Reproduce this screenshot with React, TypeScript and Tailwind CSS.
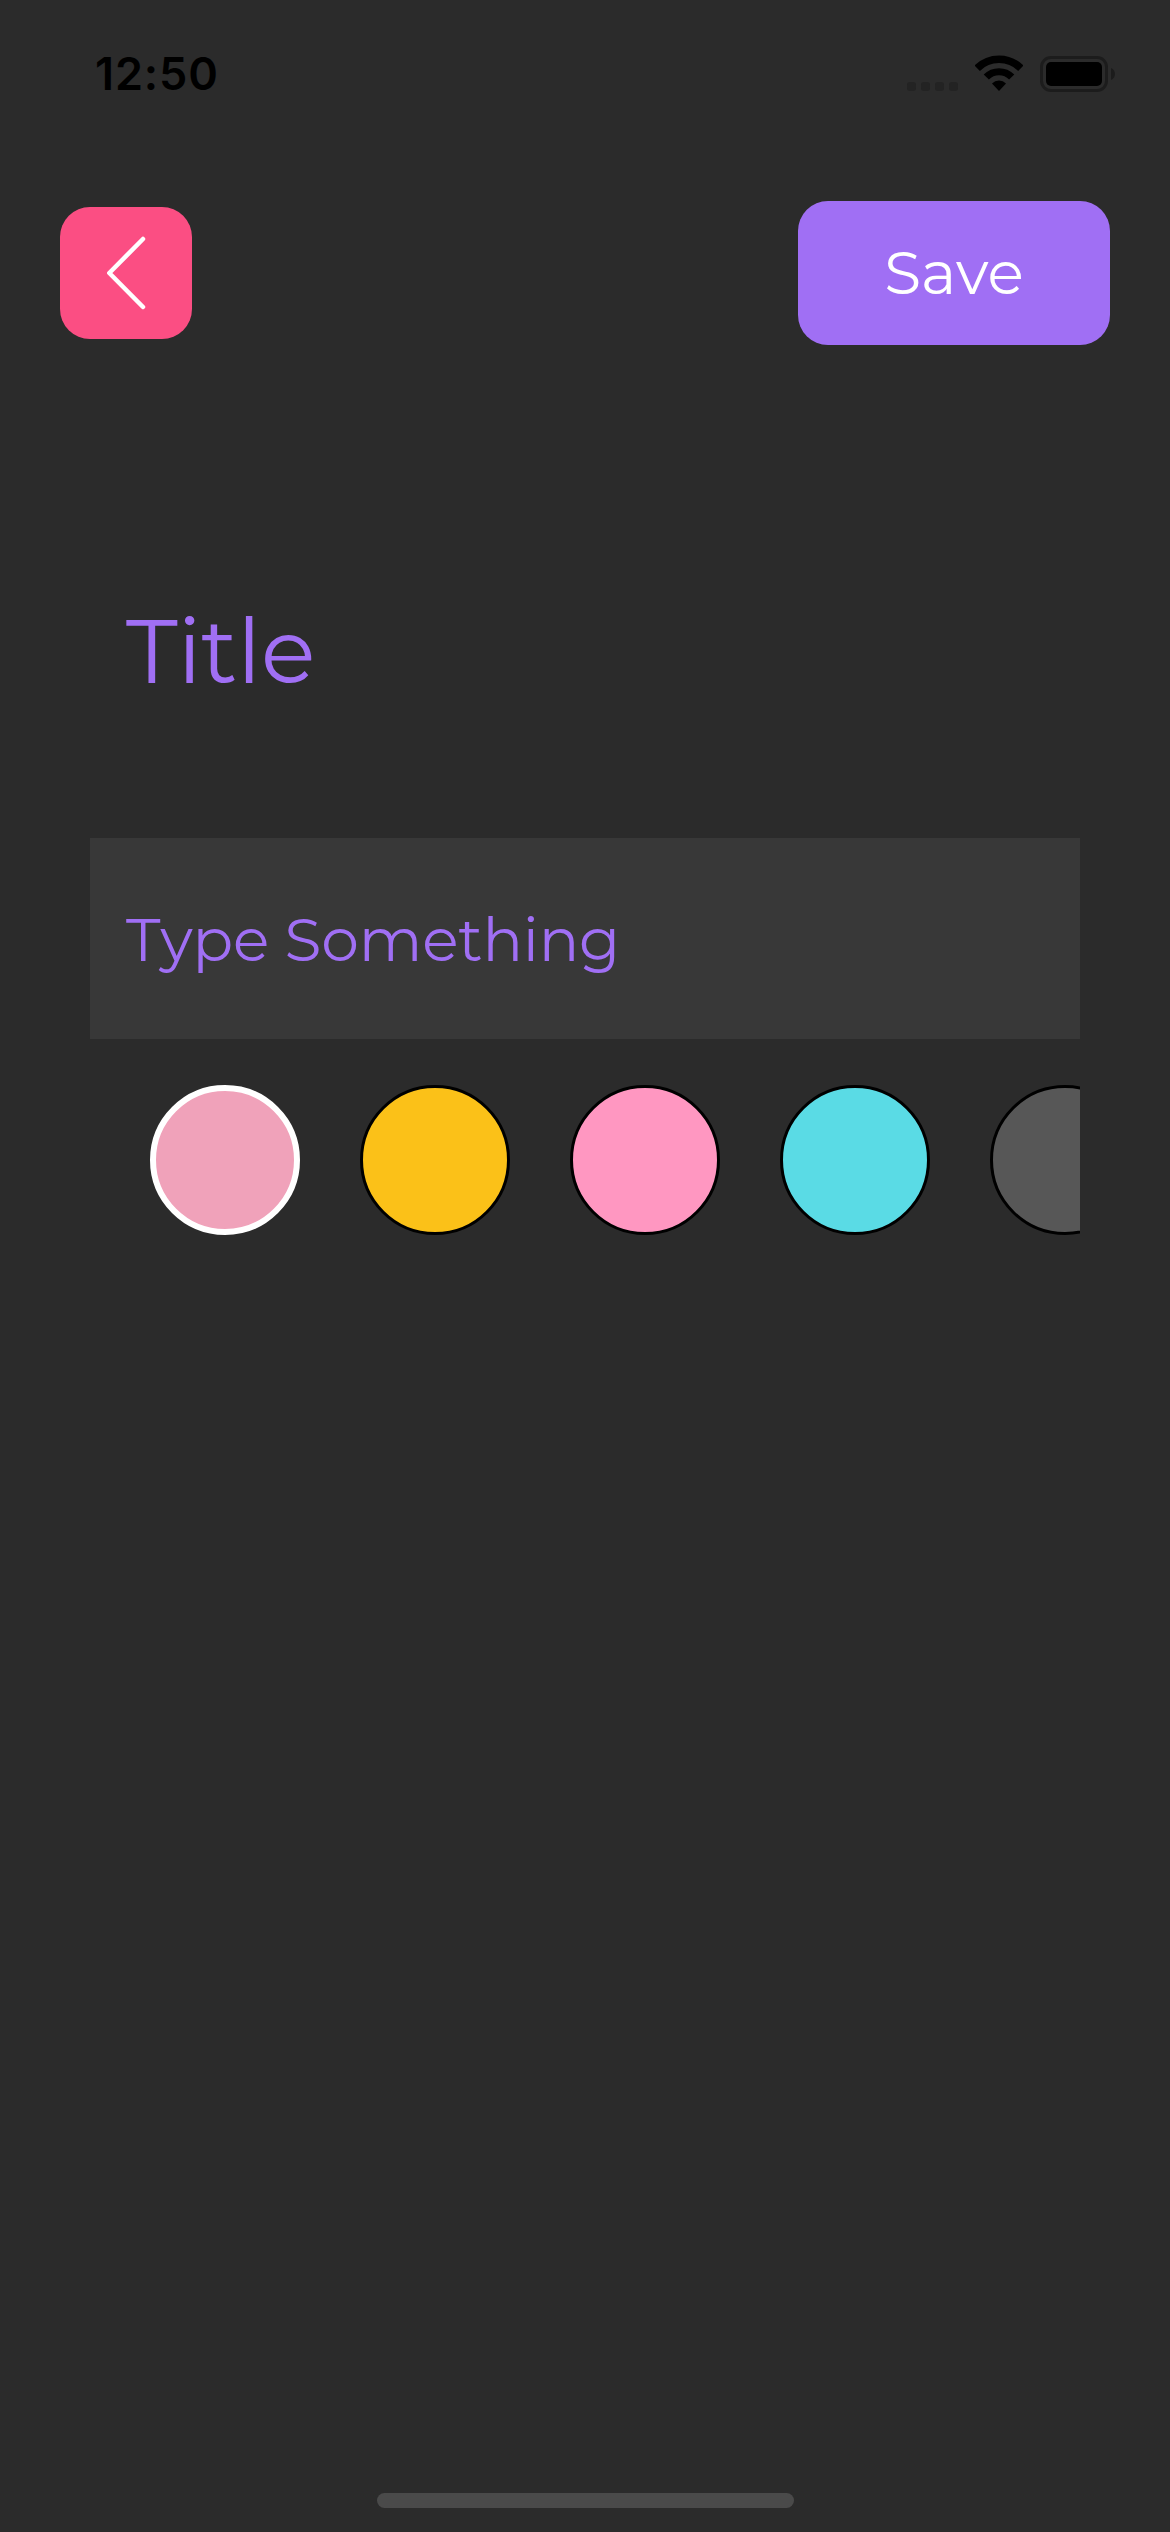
const swatches = [
  { name: "Rose", style: "border-[6px] border-white bg-[#f0a2ba]" },
  { name: "Amber", style: "border-[3px] border-black bg-[#fbc118]" },
  { name: "Pink", style: "border-[3px] border-black bg-[#ff97c1]" },
  { name: "Cyan", style: "border-[3px] border-black bg-[#5adbe5]" },
  { name: "Gray", style: "border-[3px] border-black bg-[#575757]" },
];

function StatusBar() {
  return (
    <div className="flex h-[150px] items-start justify-between pr-[55px] pl-[95px]">
      <span className="mt-[46px] font-['Inter'] text-[45px] leading-[56px] font-semibold tracking-[0.9px] text-black">
        12:50
      </span>
      <div className="mt-[55px] flex h-[37px]">
        <div className="mt-[27px] mr-[17px] flex gap-[5px]">
          {[0, 1, 2, 3].map((i) => (
            <span key={i} className="size-[9px] rounded-[3px] bg-[#232323]" />
          ))}
        </div>
        <svg width="48" height="37" viewBox="0 0 48 37" fill="none" className="mr-[17px]">
          <path d="M2.2 13.2A31 31 0 0 1 45.8 13.2" stroke="#000" strokeWidth="7.6" />
          <path d="M11.3 22.1A17.7 17.7 0 0 1 36.7 22.1" stroke="#000" strokeWidth="7.2" />
          <path d="M17 28.4A10 10 0 0 1 31 28.4L24 36Z" fill="#000" />
        </svg>
        <div className="mt-px flex h-9 w-[68px] rounded-[11px] border-[3px] border-[#1c1c1c] p-[3px]">
          <span className="flex-1 rounded-[5px] bg-black" />
        </div>
        <svg width="4" height="12" viewBox="0 0 4 12" className="mt-[13px] ml-[3px]">
          <path d="M0 0C5.3 2 5.3 10 0 12Z" fill="#1c1c1c" />
        </svg>
      </div>
    </div>
  );
}

export default function App() {
  return (
    <main className="flex h-[2532px] w-[1170px] flex-col overflow-hidden bg-[#2b2b2b] font-['Montserrat','Lato',sans-serif]">
      <StatusBar />
      <header className="mt-[51px] flex h-36 items-center justify-between px-[60px]">
        <button aria-label="Back" className="size-[132px] rounded-[30px] bg-[#fb4e83]">
          <svg width="132" height="132" viewBox="0 0 132 132" fill="none">
            <path d="M83 32L49.3 66L83 100" stroke="#fff" strokeWidth="4.5" strokeLinecap="round" strokeLinejoin="round" />
          </svg>
        </button>
        <button className="flex h-36 w-[312px] items-center justify-center rounded-[30px] bg-[#a06ff4] text-[60px] leading-[72px] text-white">
          <span>Save</span>
        </button>
      </header>
      <section className="mt-[236px] flex flex-col px-[90px]">
        <h1 className="pl-9 text-[90px] leading-[140px] tracking-[-0.2px] text-[#a06ff4]">Title</h1>
        <div className="mt-[117px] flex h-[201px] items-center bg-[#383838] pt-0.5 pl-9 text-[60px] leading-[72px] tracking-[-0.2px] text-[#a06ff4]">
          <span>Type Something</span>
        </div>
        <div className="mt-[46px] flex gap-[60px] overflow-hidden pl-[60px]">
          {swatches.map((s) => (
            <button key={s.name} aria-label={s.name} className={`size-[150px] shrink-0 rounded-full ${s.style}`} />
          ))}
        </div>
      </section>
      <div className="mt-auto mb-6 h-[15px] w-[417px] self-center rounded-full bg-[#4a4a4a]" />
    </main>
  );
}
